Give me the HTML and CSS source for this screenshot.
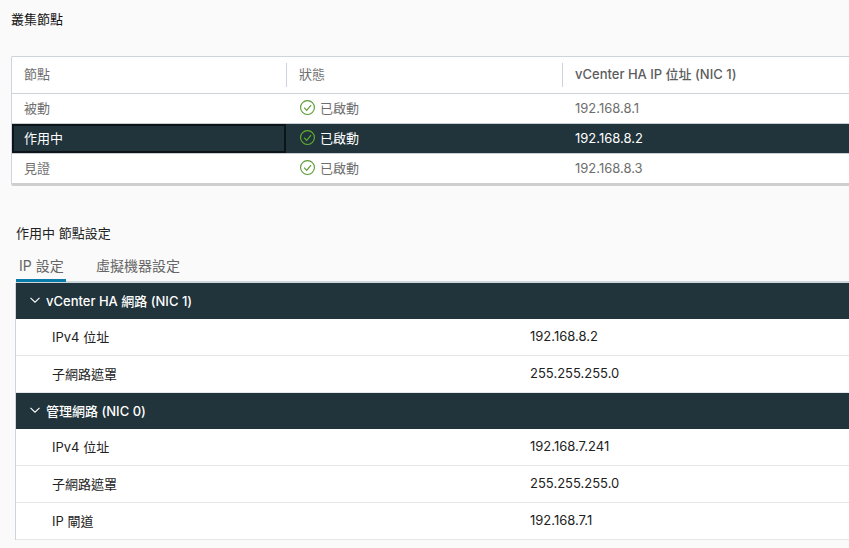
FILE: index.html
```html
<!DOCTYPE html>
<html lang="zh-Hant">
<head>
<meta charset="utf-8">
<title>叢集節點</title>
<link rel="stylesheet" href="styles.css">
</head>
<body>
<h1 class="page-title">叢集節點</h1>
<section class="grid">
  <div class="row head">
    <div class="cell">節點</div>
    <div class="cell sep">狀態</div>
    <div class="cell sep strong">vCenter HA IP 位址 (NIC 1)</div>
  </div>
  <div class="row">
    <div class="cell">被動</div>
    <div class="cell status"><svg class="ok" viewBox="0 0 16 16"><circle cx="8" cy="8" r="7.4"/><path d="M4.4 8.2 7.1 11 11.8 5.4"/></svg>已啟動</div>
    <div class="cell value">192.168.8.1</div>
  </div>
  <div class="row selected">
    <div class="cell focus">作用中</div>
    <div class="cell status"><svg class="ok" viewBox="0 0 16 16"><circle cx="8" cy="8" r="7.4"/><path d="M4.4 8.2 7.1 11 11.8 5.4"/></svg>已啟動</div>
    <div class="cell value">192.168.8.2</div>
  </div>
  <div class="row">
    <div class="cell">見證</div>
    <div class="cell status"><svg class="ok" viewBox="0 0 16 16"><circle cx="8" cy="8" r="7.4"/><path d="M4.4 8.2 7.1 11 11.8 5.4"/></svg>已啟動</div>
    <div class="cell value">192.168.8.3</div>
  </div>
</section>
<section class="details">
  <h2 class="sub-title">作用中 節點設定</h2>
  <nav class="tabs">
    <span class="tab active">IP 設定</span>
    <span class="tab">虛擬機器設定</span>
  </nav>
  <div class="panel">
    <div class="band"><svg class="chev" viewBox="0 0 12 12"><path d="M1.5 3.8 6 8.2 10.5 3.8"/></svg>vCenter HA 網路 (NIC 1)</div>
    <div class="prop"><span>IPv4 位址</span><span>192.168.8.2</span></div>
    <div class="prop"><span>子網路遮罩</span><span>255.255.255.0</span></div>
    <div class="band"><svg class="chev" viewBox="0 0 12 12"><path d="M1.5 3.8 6 8.2 10.5 3.8"/></svg>管理網路 (NIC 0)</div>
    <div class="prop"><span>IPv4 位址</span><span>192.168.7.241</span></div>
    <div class="prop"><span>子網路遮罩</span><span>255.255.255.0</span></div>
    <div class="prop"><span>IP 閘道</span><span>192.168.7.1</span></div>
  </div>
</section>
</body>
</html>
```
FILE: styles.css
```css
* { box-sizing: border-box; }
html, body { height: 100%; overflow: hidden; }
body {
  margin: 0;
  width: 849px;
  height: 548px;
  padding: 12px 0 0 11px;
  background: #fafafa;
  color: #1b1b1b;
  font-family: Inter, "Noto Sans CJK TC", sans-serif;
  font-size: 13px;
}
.page-title {
  margin: 0 0 29px;
  height: 15px;
  line-height: 15px;
  font-size: 13px;
  font-weight: 400;
  color: #111;
}
.grid {
  height: 130px;
  margin-right: -4px;
  background: #fff;
  border: 1px solid #ccd5db;
  border-right: 0;
  border-bottom: 3px solid #cfcfcf;
  border-radius: 2px 0 0 2px;
  color: #6e6e6e;
}
.row {
  display: grid;
  grid-template-columns: 274px 276px 1fr;
  height: 29px;
  align-items: stretch;
}
.row.head {
  height: 37px;
  border-bottom: 1px solid #ccd5db;
  padding: 6px 0;
}
.cell {
  display: flex;
  align-items: center;
  padding-left: 12px;
  padding-bottom: 2px;
  line-height: 14px;
}
.cell.sep { border-left: 1px solid #ccd5db; }
.cell.strong { font-weight: 500; color: #5c5c5c; }
.cell.value { padding-left: 13px; }
.head .cell { padding-bottom: 3px; }
.status { padding-left: 14px; gap: 5px; }
.ok {
  width: 15px;
  height: 15px;
  flex: none;
  fill: none;
  stroke: #5a9a36;
  stroke-width: 1.2;
}
.row.selected {
  height: 31px;
  background: #21333b;
  color: #fff;
  border-top: 1px solid #c8ced1;
  border-bottom: 1px solid #c8ced1;
}
.row.selected .ok { stroke: #62b22f; }
.cell.focus {
  border: 2px solid #0d1417;
  padding-left: 10px;
  padding-bottom: 2px;
}
.details { margin: 39px 0 0 4px; }
.sub-title {
  margin: 0 0 11px;
  padding-left: 1px;
  height: 16px;
  line-height: 16px;
  font-size: 13px;
  font-weight: 400;
  color: #222;
}
.tabs {
  display: flex;
  align-items: flex-start;
  gap: 27px;
  height: 31px;
  margin: 0 -4px 0 1px;
  color: #666;
  font-size: 14px;
  border-bottom: 2px solid #cdd5da;
}
.tab {
  height: 30px;
  padding: 6px 3px 0;
  line-height: 16px;
  white-space: nowrap;
}
.tab.active { width: 50px; border-bottom: 3px solid #0a7aa8; }
.panel {
  margin-right: -4px;
  background: #fff;
  border-left: 1px solid #ccd5db;
}
.band {
  display: flex;
  align-items: center;
  gap: 5px;
  height: 36px;
  padding-left: 13px;
  padding-bottom: 2px;
  background: #21333b;
  color: #fff;
  font-weight: 500;
}
.chev {
  width: 12px;
  height: 12px;
  flex: none;
  fill: none;
  stroke: #fff;
  stroke-width: 1.1;
}
.prop {
  display: grid;
  grid-template-columns: 478px 1fr;
  align-items: center;
  height: 37px;
  padding-left: 36px;
  padding-bottom: 2px;
  color: #222;
  border-bottom: 1px solid #e4e8ea;
}
```
